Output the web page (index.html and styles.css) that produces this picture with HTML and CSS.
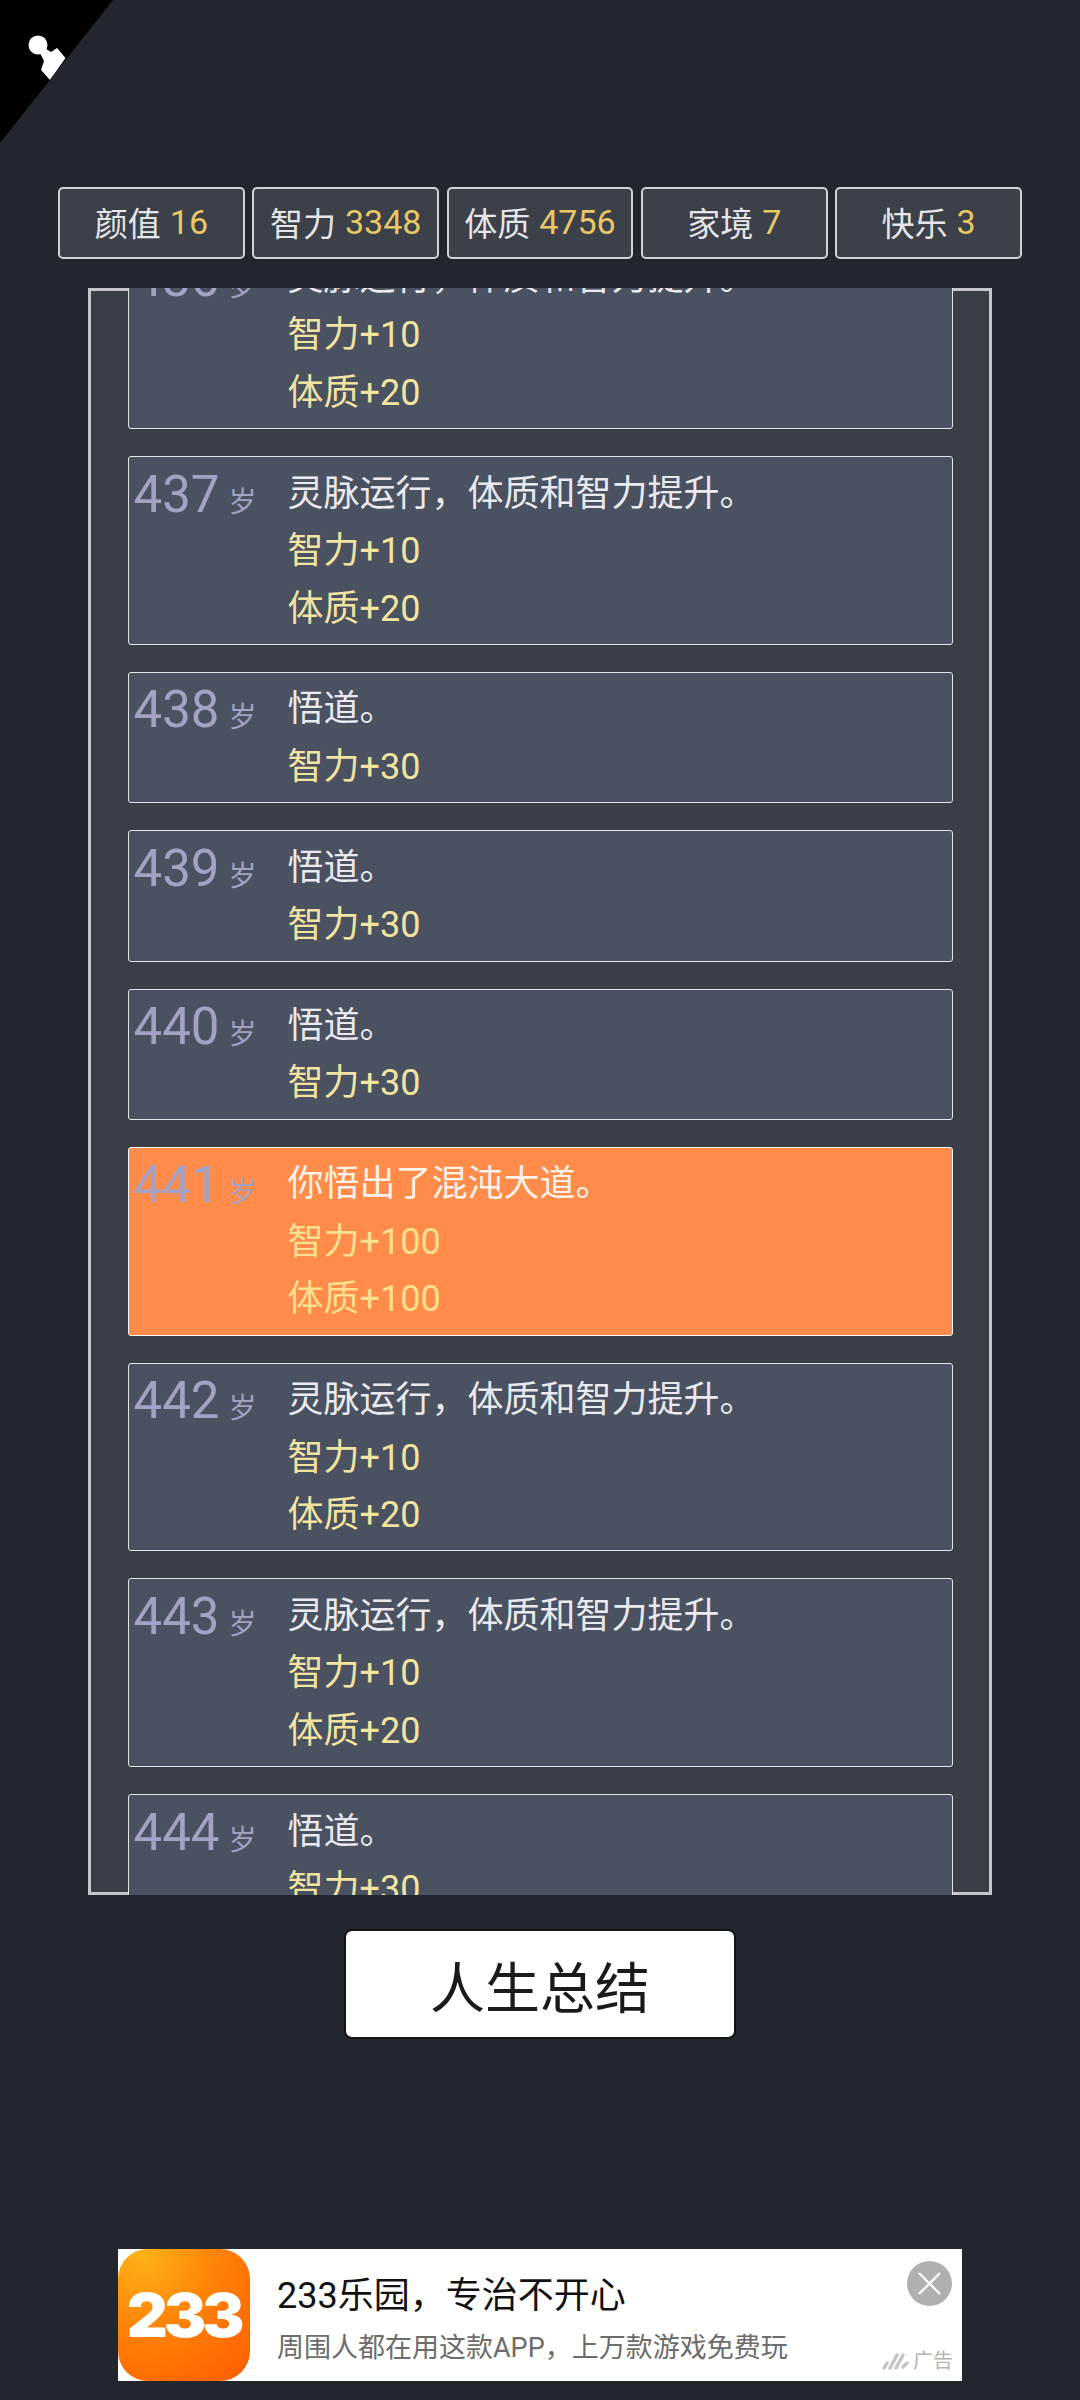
FILE: index.html
```html
<!DOCTYPE html>
<html lang="zh-CN">
   <head>
      <meta http-equiv="Content-Type" content="text/html;charset=utf-8" />
      <title>人生总结</title>
      <link rel="stylesheet" href="styles.css">
   </head>
   <body>
      <div class="corner">
         <svg class="corner-icon" width="50" height="56" viewBox="0 0 50 56">
            <circle cx="11" cy="14" r="9.5" fill="#fff"/>
            <path d="M12 20 L19 18 L24 21 L30 17 L38.5 27 L23 49 L14 39 L17 30 Z" fill="#fff"/>
         </svg>
      </div>
      <main class="page">
         <div class="stats">
            <div class="stat">颜值 <span class="stat-num">16</span></div>
            <div class="stat">智力 <span class="stat-num">3348</span></div>
            <div class="stat">体质 <span class="stat-num">4756</span></div>
            <div class="stat">家境 <span class="stat-num">7</span></div>
            <div class="stat">快乐 <span class="stat-num">3</span></div>
         </div>
         <section class="log">
            <ul class="log-list">
               <li class="item">
                  <div class="age"><span class="age-num">436</span><span class="age-unit">岁</span></div>
                  <div class="body">
                     <p class="line">灵脉运行，体质和智力提升。</p>
                     <p class="line effect">智力+10</p>
                     <p class="line effect">体质+20</p>
                  </div>
               </li>
               <li class="item">
                  <div class="age"><span class="age-num">437</span><span class="age-unit">岁</span></div>
                  <div class="body">
                     <p class="line">灵脉运行，体质和智力提升。</p>
                     <p class="line effect">智力+10</p>
                     <p class="line effect">体质+20</p>
                  </div>
               </li>
               <li class="item">
                  <div class="age"><span class="age-num">438</span><span class="age-unit">岁</span></div>
                  <div class="body">
                     <p class="line">悟道。</p>
                     <p class="line effect">智力+30</p>
                  </div>
               </li>
               <li class="item">
                  <div class="age"><span class="age-num">439</span><span class="age-unit">岁</span></div>
                  <div class="body">
                     <p class="line">悟道。</p>
                     <p class="line effect">智力+30</p>
                  </div>
               </li>
               <li class="item">
                  <div class="age"><span class="age-num">440</span><span class="age-unit">岁</span></div>
                  <div class="body">
                     <p class="line">悟道。</p>
                     <p class="line effect">智力+30</p>
                  </div>
               </li>
               <li class="item item-hot">
                  <div class="age"><span class="age-num">441</span><span class="age-unit">岁</span></div>
                  <div class="body">
                     <p class="line">你悟出了混沌大道。</p>
                     <p class="line effect">智力+100</p>
                     <p class="line effect">体质+100</p>
                  </div>
               </li>
               <li class="item">
                  <div class="age"><span class="age-num">442</span><span class="age-unit">岁</span></div>
                  <div class="body">
                     <p class="line">灵脉运行，体质和智力提升。</p>
                     <p class="line effect">智力+10</p>
                     <p class="line effect">体质+20</p>
                  </div>
               </li>
               <li class="item">
                  <div class="age"><span class="age-num">443</span><span class="age-unit">岁</span></div>
                  <div class="body">
                     <p class="line">灵脉运行，体质和智力提升。</p>
                     <p class="line effect">智力+10</p>
                     <p class="line effect">体质+20</p>
                  </div>
               </li>
               <li class="item">
                  <div class="age"><span class="age-num">444</span><span class="age-unit">岁</span></div>
                  <div class="body">
                     <p class="line">悟道。</p>
                     <p class="line effect">智力+30</p>
                  </div>
               </li>
            </ul>
         </section>
         <button class="summary">人生总结</button>
         <aside class="ad">
            <div class="ad-logo"><span class="ad-logo-text">233</span></div>
            <div class="ad-copy">
               <div class="ad-title">233乐园，专治不开心</div>
               <div class="ad-sub">周围人都在用这款APP，上万款游戏免费玩</div>
            </div>
            <div class="ad-close">
               <svg width="45" height="45" viewBox="0 0 45 45">
                  <path d="M12 12 L33 33 M33 12 L12 33" stroke="#fff" stroke-width="2.4" fill="none"/>
               </svg>
            </div>
            <div class="ad-tag">
               <svg width="27" height="18" viewBox="0 0 27 18">
                  <path d="M2 16 L5 11 M8 16 L15 3 M14 16 L21 3 M21 15 L25 11" stroke="#c4c4c4" stroke-width="3.4" stroke-linecap="round" fill="none"/>
               </svg>
               <span>广告</span>
            </div>
         </aside>
      </main>
   </body>
</html>
```

FILE: styles.css
```css
* {box-sizing: border-box;}
html, body {margin: 0; padding: 0;}
body {
   width: 1080px;
   height: 2400px;
   overflow: hidden;
   background: #22262f;
   font-family: Roboto, "Noto Sans CJK SC", sans-serif;
}

.corner {
   position: absolute;
   left: 0;
   top: 0;
   width: 113px;
   height: 143px;
   background: #000;
   clip-path: polygon(0 0, 100% 0, 0 100%);
}
.corner-icon {position: absolute; left: 27px; top: 31px;}

.page {
   display: flex;
   flex-direction: column;
   align-items: center;
   padding-top: 187px;
}

.stats {
   display: flex;
   gap: 7.5px;
   width: 964px;
}
.stat {
   flex: 1;
   height: 72px;
   padding-bottom: 2px;
   display: flex;
   align-items: center;
   justify-content: center;
   gap: 9px;
   border: 2px solid #d2d3d6;
   border-radius: 5px;
   background: #3c4048;
   color: #e6e6e8;
   font-size: 33px;
}
.stat-num {color: #e8c766; font-size: 34px;}

.log {
   width: 904px;
   height: 1607px;
   margin-top: 29px;
   padding: 0 39.5px;
   overflow: hidden;
   background: #3a3e47;
   box-shadow: inset 0 0 0 3px #c4c6ca;
}
.log-list {
   list-style: none;
   margin: -47.5px 0 0;
   padding: 0;
   display: flex;
   flex-direction: column;
   gap: 27px;
}

.item {
   display: flex;
   padding: 8.5px 0 6px 5px;
   border: 1.5px solid #e4e5e8;
   border-radius: 3px;
   background: #4a5161;
}
.item-hot {background: #ff8c4b; border-color: #f8f8f8;}

.age {
   width: 154px;
   flex-shrink: 0;
   color: #a3a2c4;
   line-height: 57.4px;
}
.age-num {font-size: 51px;}
.age-unit {font-size: 28px; margin-left: 9px;}

.line {
   margin: 0;
   font-size: 36px;
   line-height: 57.4px;
   color: #e9e9ee;
   white-space: nowrap;
}
.effect {color: #f2e4a0;}
.item-hot .line {color: #fff2e8;}
.item-hot .effect {color: #ffe08f;}

.summary {
   width: 392px;
   height: 110px;
   margin-top: 34px;
   padding-bottom: 2px;
   border: 2px solid #111317;
   border-radius: 8px;
   background: #fff;
   color: #1a1a1a;
   font-family: "Noto Sans CJK SC", sans-serif;
   font-size: 55px;
}

.ad {
   position: relative;
   display: flex;
   width: 844px;
   height: 132px;
   margin-top: 210px;
   background: #fff;
}
.ad-logo {
   width: 132px;
   height: 132px;
   flex-shrink: 0;
   display: flex;
   align-items: center;
   justify-content: center;
   border-radius: 30px;
   background: radial-gradient(circle at 18% 5%, #ffb316 0, #ff8208 45%, #ff5c00 100%);
}
.ad-logo-text {
   color: #fff;
   font-family: Inter, sans-serif;
   font-weight: 900;
   font-size: 60px;
   letter-spacing: -4px;
   transform: scaleX(1.06);
}
.ad-copy {padding: 23px 0 0 27px;}
.ad-title {
   font-size: 36px;
   line-height: 48px;
   color: #111;
}
.ad-sub {
   margin-top: 8px;
   font-size: 27px;
   line-height: 40px;
   color: #6c6c6c;
}
.ad-close {
   position: absolute;
   right: 10px;
   top: 12px;
   width: 45px;
   height: 45px;
   border-radius: 50%;
   background: #b0b0b0;
}
.ad-tag {
   position: absolute;
   right: 9px;
   bottom: 8px;
   display: flex;
   align-items: center;
   gap: 4px;
   color: #b4b4b4;
   font-size: 20px;
   line-height: 24px;
}
```
